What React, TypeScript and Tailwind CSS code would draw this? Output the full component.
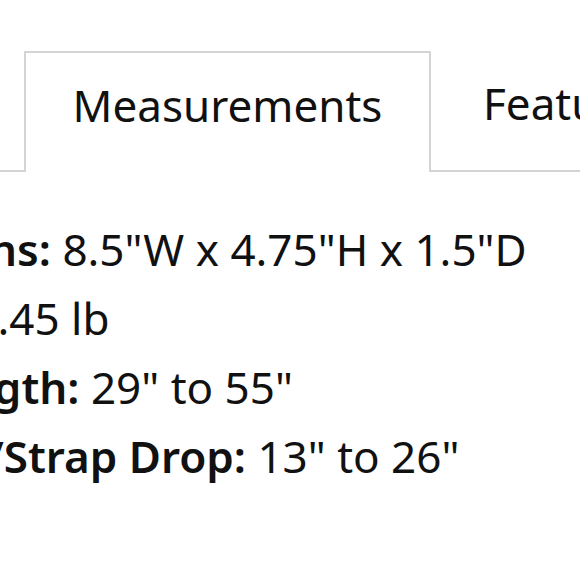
import React from 'react';

const rows = [
  { label: 'Dimensions:', value: '8.5"W x 4.75"H x 1.5"D', shift: 'ml-[-9px]' },
  { label: 'Weight:', value: '1.45 lb', shift: 'ml-0' },
  { label: 'Strap Length:', value: '29" to 55"', shift: 'ml-[-5px]' },
  { label: 'Crossbody/Strap Drop:', value: '13" to 26"', shift: 'ml-[-33px]' },
];

const App: React.FC = () => {
  return (
    <div className="w-[580px] h-[580px] overflow-hidden bg-white text-[#111] font-['Noto_Sans',sans-serif]">
      <div className="flex items-stretch pt-[51px]">
        <div className="w-[24px] shrink-0 border-b-2 border-[#d4d4d4]" />
        <div className="shrink-0 h-[121px] w-[407px] pb-[16px] border-2 border-b-0 border-[#d4d4d4] flex items-center justify-center text-[44px]">
          Measurements
        </div>
        <div className="shrink-0 h-[121px] pl-[52px] pb-[16px] border-b-2 border-[#d4d4d4] flex items-center text-[44px] whitespace-nowrap">
          Features
        </div>
      </div>
      <div className="ml-[-204px] mt-[43px] flex flex-col text-[44px] leading-[69px] whitespace-nowrap">
        {rows.map(r => (
          <div key={r.label} className={r.shift}>
            <span className="font-semibold">{r.label}</span> {r.value}
          </div>
        ))}
      </div>
    </div>
  );
};

export default App;
